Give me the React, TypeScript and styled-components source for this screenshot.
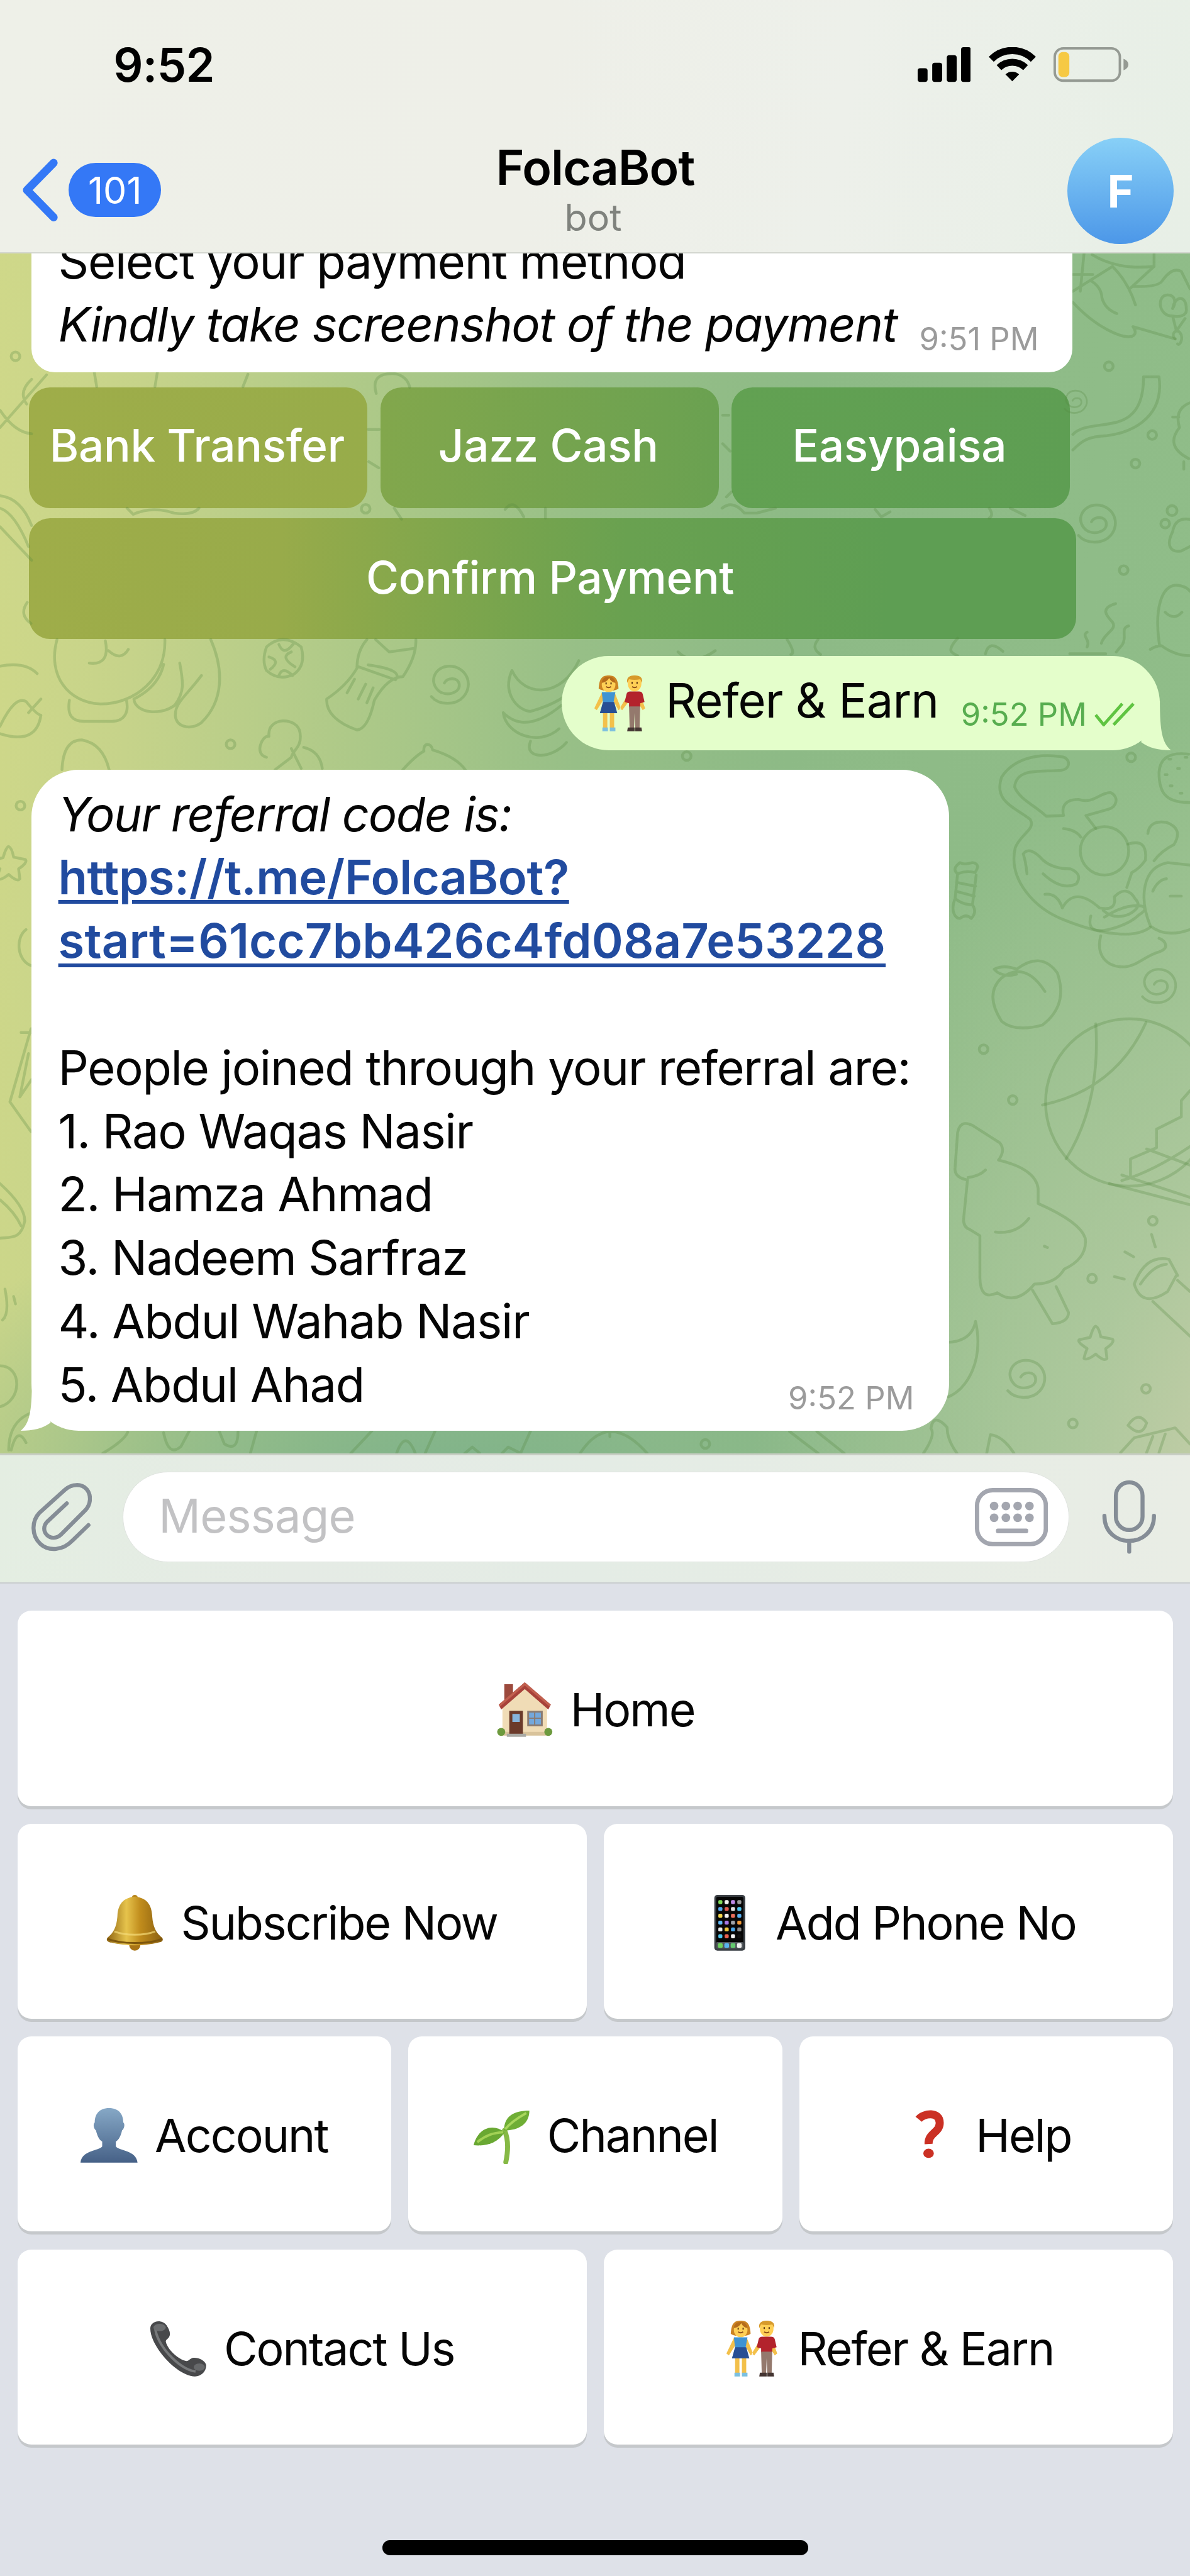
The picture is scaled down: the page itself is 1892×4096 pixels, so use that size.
import type { ReactNode } from "react";
import styled, { createGlobalStyle } from "styled-components";

interface IKey {
  label: string;
  emoji: ReactNode;
}

const GlobalStyle = createGlobalStyle`
  * {
    box-sizing: border-box;
    margin: 0;
    padding: 0;
  }

  /* 192rem is the full width of the screen */
  html {
    font-size: 9.8542px;
  }

  body {
    font-family: Inter, "Liberation Sans", sans-serif;
    font-size: 7.7rem;
    color: #050505;
    background-color: #dee1e8;
  }
`;

/* ---------- emoji ---------- */

const HouseEmoji = () => (
  <Emoji viewBox="0 0 92 92">
    <rect x="13" y="5" width="14" height="34" fill="#9c4a3d" />
    <path d="M10 40 46 8 82 40V86H10Z" fill="#f0dcb6" />
    <path d="M46 2 88 38 84 46 46 13 8 46 4 38Z" fill="#a8423a" />
    <path d="M46 2 88 38 86 41 46 7 6 41 4 38Z" fill="#c1604f" />
    <path d="M10 82h74v6H10z" fill="#d9c39b" />
    <rect x="21" y="48" width="22" height="40" fill="#6b3a2a" />
    <rect x="26" y="53" width="12" height="13" fill="#86b4dc" />
    <rect x="50" y="48" width="25" height="25" fill="#8a7b72" />
    <rect x="53" y="51" width="19" height="19" fill="#74a8dc" />
    <path d="M62 51v19M53 60h19" stroke="#8a7b72" strokeWidth="2" />
    <rect x="17" y="85" width="31" height="5" fill="#a9a9a4" />
    <circle cx="8" cy="82" r="6.500" fill="#6d9a3e" />
    <circle cx="84" cy="82" r="6.500" fill="#6d9a3e" />
  </Emoji>
);

const BellEmoji = () => (
  <Emoji viewBox="0 0 92 92">
    <defs>
      <linearGradient id="bell" x1="0" x2="1">
        <stop offset="0" stopColor="#8f6512" />
        <stop offset=".35" stopColor="#e6c34c" />
        <stop offset=".6" stopColor="#c08c1c" />
        <stop offset="1" stopColor="#8a5f10" />
      </linearGradient>
    </defs>
    <circle cx="46" cy="6" r="5" fill="#b8861c" />
    <circle cx="46" cy="82" r="9" fill="#a87416" />
    <path
      d="M46 4C27 5 19 17 18 34 17 52 12 62 2 70c-3 4 0 7 6 8 24 6 52 6 76 0 6-1 9-4 6-8-10-8-15-18-16-36C73 17 65 5 46 4Z"
      fill="url(#bell)"
    />
    <path d="M2 72c22 9 66 9 88 0" fill="none" stroke="#7d560d" strokeWidth="3" />
    <path d="M13 60c18 7 48 7 66 0" fill="none" stroke="#f3da78" strokeWidth="3" opacity=".7" />
  </Emoji>
);

const appColors = [
  ["#7ed957", "#f2f2f2", "#c08be8", "#9a9a9a"],
  ["#56a8ef", "#e05a50", "#e0e0e0", "#4cc4ee"],
  ["#f3d64b", "#f2f2f2", "#e86d5a", "#58b0f2"],
  ["#60b7f5", "#a778e8", "#9fa4a8", "#f09a38"],
  ["#e8e8e8", "#f0c93e", "#4aa8ea", "#8c8c8c"],
  ["#4cc4ee", "#ea6050", "#f4f4f4", "#111"],
];

const PhoneEmoji = () => (
  <Emoji viewBox="0 0 92 92">
    <rect x="21" y="1" width="50" height="90" rx="5" fill="#3b4045" />
    <rect x="24" y="4" width="44" height="84" rx="3" fill="#060606" />
    {appColors.map((row, y) =>
      row.map((color, x) => (
        <rect key={`${x}${y}`} x={27.5 + x * 10.2} y={9.500 + y * 11} width="6.500" height="6.500" rx="2" fill={color} />
      )),
    )}
    <rect x="24" y="77" width="44" height="11" rx="2" fill="#51575c" />
    {["#6fd35c", "#59b3ee", "#63c96e", "#f1f1f1"].map((color, x) => (
      <rect key={color} x={27 + x * 10.2} y="79" width="7.5" height="7.5" rx="2" fill={color} />
    ))}
  </Emoji>
);

const PersonEmoji = () => (
  <Emoji viewBox="0 0 92 92">
    <defs>
      <linearGradient id="person" x2="0" y2="1">
        <stop offset="0" stopColor="#86a8c6" />
        <stop offset="1" stopColor="#466187" />
      </linearGradient>
    </defs>
    <path
      d="M46 2C30 2 23 12 23 25c-3 2-2 10 2 13 2 9 5 15 10 18v8C30 71 2 70 0 90h92C90 70 62 71 57 64v-8c5-3 8-9 10-18 4-3 5-11 2-13C69 12 62 2 46 2Z"
      fill="url(#person)"
    />
  </Emoji>
);

const SeedlingEmoji = () => (
  <Emoji viewBox="0 0 92 92">
    <path d="M51 38C57 52 57 70 53 89" fill="none" stroke="#86b945" strokeWidth="8" strokeLinecap="round" />
    <path d="M50 38C50 15 66 6 91 6 91 26 76 38 50 38Z" fill="#6fae35" />
    <path d="M52 36C60 26 70 19 86 10" fill="none" stroke="#a9d75c" strokeWidth="4" />
    <path d="M51 41C32 26 8 34 1 62 22 64 40 58 51 41Z" fill="#69a832" />
    <path d="M49 41C32 42 20 46 7 57" fill="none" stroke="#a2d155" strokeWidth="4" />
  </Emoji>
);

const QuestionEmoji = () => (
  <Emoji viewBox="0 0 92 92">
    <path d="M28 20C36 10 62 7 62 26 62 42 43 42 44 60" fill="none" stroke="#cb3024" strokeWidth="13" />
    <ellipse cx="44" cy="75" rx="8.5" ry="7.5" fill="#cb3024" />
  </Emoji>
);

const ReceiverEmoji = () => (
  <Emoji viewBox="0 0 92 92">
    <path
      d="M4 6C10 0 22 1 27 8c4 6 7 12 5 18-2 5-6 5-6 9 3 13 20 28 32 31 5 1 7-4 12-5 8-1 19 4 21 11 1 10-7 19-18 19C44 91 1 42 1 14c0-4 1-6 3-8Z"
      fill="#48494b"
    />
    <path d="M9 12C10 39 47 80 74 83" fill="none" stroke="#77797b" strokeWidth="4" />
    <ellipse cx="16" cy="12" rx="10" ry="6" fill="#6c6e70" />
    <ellipse cx="80" cy="76" rx="9" ry="6" fill="#67696b" />
  </Emoji>
);

const CoupleEmoji = () => (
  <Emoji viewBox="0 0 92 92">
    <g fill="#f3c04a">
      <path d="M17 29 5 54l4 3 14-22ZM38 29l10 25-4 3-12-22ZM61 29 46 54l4 3 15-20ZM78 29l9 25-4 3-12-20Z" />
      <path d="M19 60h7v26h-7zM30 60h7v26h-7z" />
    </g>
    <path d="M12 22C13 4 19 1 28 1s15 3 16 21c-4 5-28 5-32 0Z" fill="#cc8423" />
    <ellipse cx="28" cy="16" rx="11" ry="12" fill="#ffcf55" />
    <path d="M17 13q8-1 12-8 3 7 10 8-1-10-11-10T17 13Z" fill="#b56c1b" />
    <path d="M17 28h22l-3 17 5 17H14l5-17Z" fill="#3f93d3" />
    <path d="M19 44h18l5 18H14Z" fill="#284f94" />
    <path d="M18 85h9v6h-9zM30 85h9v6h-9z" fill="#7cc0e0" />
    <ellipse cx="70" cy="14" rx="11" ry="13" fill="#ffcf55" />
    <path d="M58 13q-2-12 12-12t12 12l-3-6q-9 2-18 0Z" fill="#d79a2b" />
    <path d="M57 31q1-4 6-4h14q5 0 6 4l3 13-7 2v6H61v-6l-7-2Z" fill="#b3232c" />
    <path d="M61 51h18l-1 35h-7l-1-24-1 24h-7Z" fill="#94796d" />
    <path d="M59 85h11v6H58zM71 85h10l1 6H71z" fill="#443532" />
    <path d="M24 19q4 3 8 0M66 19q4 3 8 0" fill="none" stroke="#8d4d17" strokeWidth="2" />
    <path d="M23 14h2M31 14h2M65 13h2M73 13h2" stroke="#5c3411" strokeWidth="3" />
  </Emoji>
);

/* ---------- interface icons ---------- */

const SignalIcon = () => (
  <svg viewBox="0 0 86 56">
    <rect y="34" width="16" height="22" rx="4" />
    <rect x="23.5" y="25" width="16" height="31" rx="4" />
    <rect x="47" y="13" width="16" height="43" rx="4" />
    <rect x="70" width="16" height="56" rx="4" />
  </svg>
);

const WifiIcon = () => (
  <svg viewBox="0 0 76 56">
    <path d="M4 19.500a48 48 0 0 1 68 0" fill="none" stroke="#000" strokeWidth="11.500" />
    <path d="M16.500 33a31 31 0 0 1 43 0" fill="none" stroke="#000" strokeWidth="11" />
    <path d="M38 55 27 44a16 16 0 0 1 22 0Z" />
  </svg>
);

const BatteryIcon = () => (
  <svg viewBox="0 0 123 57">
    <rect x="2" y="2" width="107" height="53" rx="14" fill="none" stroke="#959a93" strokeWidth="4" />
    <rect x="8" y="8" width="18" height="41" rx="7" fill="#f6c944" />
    <path d="M115 19q8 3 8 9.500t-8 9.500Z" fill="#959a93" />
  </svg>
);

const BackIcon = () => (
  <svg viewBox="0 0 58 102">
    <path d="M51 7 8 51l43 44" fill="none" stroke="#3478f6" strokeWidth="13" strokeLinecap="round" strokeLinejoin="round" />
  </svg>
);

const ChecksIcon = () => (
  <svg viewBox="0 0 66 38">
    <path d="M2 20 15 36 45 2M31 36 63 2" fill="none" stroke="#5fc441" strokeWidth="5" strokeLinejoin="round" />
  </svg>
);

const ClipIcon = () => (
  <svg viewBox="0 0 98 110">
    <path
      d="M93 68 67 93C52 109 29 111 15 98 1 84 1 62 14 48L55 11C66 1 82 1 90 10c8 10 7 24-2 34L49 83c-7 7-17 7-23 1s-6-15 1-22l31-29"
      fill="none"
      stroke="#858d96"
      strokeWidth="6.500"
      strokeLinecap="round"
    />
  </svg>
);

const KeyboardIcon = () => (
  <svg viewBox="0 0 118 94">
    <rect x="3.500" y="3.500" width="111" height="87" rx="25" fill="none" stroke="#a3a6af" strokeWidth="7" />
    {[31, 50, 69, 88].map((x) => (
      <g key={x} fill="#a3a6af">
        <circle cx={x} cy="29" r="7" />
        <circle cx={x} cy="48" r="7" />
      </g>
    ))}
    <rect x="34" y="65.500" width="52" height="7.500" rx="3" fill="#a3a6af" />
  </svg>
);

const MicIcon = () => (
  <svg viewBox="0 0 88 120">
    <g fill="none" stroke="#858d96" strokeWidth="6.500" strokeLinecap="round">
      <rect x="22.500" y="4" width="43" height="77" rx="21.500" />
      <path d="M4 58c0 54 80 54 80 0M44 99v17" />
    </g>
  </svg>
);

const Tail = ({ left }: { left?: boolean }) => (
  <TailSvg viewBox="0 0 80 60" $left={left}>
    <path d="M62-20C62 30 66 48 80 60 60 60 44 56 32 47V30L52-20Z" fill={left ? "#fff" : "#e4fecb"} />
  </TailSvg>
);

/* ---------- wallpaper ---------- */

const Spiral = ({ x, y, r = 1 }: { x: number; y: number; r?: number }) => (
  <path
    transform={`translate(${x} ${y}) scale(${r})`}
    d="M-11-4C-7-13 12-14 13-1 14 13-9 18-20 9-38-7-25-31-3-31 24-31 37-2 20 18 7 33-20 32-32 18"
  />
);

const Star = ({ x, y }: { x: number; y: number }) => (
  <path
    transform={`translate(${x} ${y})`}
    d="M0-28Q5-26 8-11L27-7Q31-2 16 8L18 24Q14 30 0 17-14 28-19 24-18 18-14 8-30-2-27-6L-9-10Q-4-28 0-28Z"
  />
);

const dots = [
  [1789, 591], [1859, 702], [1832, 748], [1813, 920], [1587, 1693], [1634, 1775], [1762, 2063], [1860, 1970],
  [1849, 2241], [1731, 2297], [1825, 1222], [372, 1201], [590, 821], [25, 575], [33, 1300], [1138, 2330], [1108, 1220],
];

const Wallpaper = () => (
  <WallpaperSvg viewBox="0 409 1920 1936" preserveAspectRatio="none">
    {dots.map(([x, y]) => (
      <circle key={x} cx={x} cy={y} r="7" />
    ))}
    <Spiral x={1772} y={846} />
    <Spiral x={1737} y={649} r={0.6} />
    <Spiral x={728} y={1106} />
    <Spiral x={1872} y={1592} r={0.9} />
    <Spiral x={1658} y={2226} />
    <Star x={1768} y={2168} />
    <Star x={14} y={1394} />
    {/* hat, butterfly and ribbon */}
    <path d="M1731 488C1770 530 1810 546 1826 543 1836 539 1830 530 1828 527L1896 547M1731 470 1795 430Q1820 455 1832 492M1760 453q17 10 18 28 5 18 24 25M1743 470l6-61M1731 443h32M1762 411q40 25 100 19V409M1862 430l-38 35M1828 462q42 2 48-10 16-22 30-14l14 28" />
    <path d="M1892 510c-24 0-26-34-8-34 12 0 14 12 8 22 4-22 22-22 22 0 2 12-12 14-22 12Zm0 0 6 24 14-20M1896 547c-8-8 2-18 8-10s0 22-4 18" />
    <path d="M1731 701C1760 670 1846 712 1845 608H1870C1880 680 1815 700 1786 703 1755 704 1745 712 1731 726" />
    {/* bird, paw, egg and steam */}
    <path d="M1920 650q-26 10-17 40-24 30 15 50M1892 673h10M1910 745v12M1920 838q-24-4-28 20c-12 24-2 34 14 31l14-7" />
    <circle cx="1891" cy="824" r="8" />
    <circle cx="1880" cy="845" r="7" />
    <path d="M1871 1042C1862 985 1873 945 1898 944q17 2 22 10M1880 988q14 14 27 0M1856 1048q9-6 18-6 22 16 46 16" />
    <path d="M1800 974c-28 8-12 22-5 30 8 12-14 18-18 34M1821 1010c-14 4-2 18-10 30l-10 12M1754 1020c-10 6 6 12 0 24M1726 1055h58" />
    {/* pear, sock and bananas */}
    <path d="M92 1032C76 1090 110 1134 162 1136 218 1136 268 1095 266 1032M112 1130c-4 24 4 34 24 34h44c22 0 28-16 24-34M340 1032c22 50 20 100-15 134-18 14-44 6-42-14 0-18 18-30 42-62M290 1070c6 32 8 46-8 68-24 18-64 12-66-10q40-20 48-56M170 1034q8 40-26 36M175 1050q20 18 32-2" />
    <path d="M592 1032Q576 1050 576 1078 560 1106 527 1128 526 1160 576 1178 594 1176 604 1130 626 1092 650 1092 672 1060 671 1032M576 1075l62 22q14-16-44-24M606 1032l22 20 42-6M572 1096l-12 22M590 1104l-12 24M602 1110l-10 24" />
    <path d="M826 1082c20 44 80 44 108-16M826 1082c-16 36 8 64 30 66 34-10 66-24 76-52M812 1150c4 34 56 56 90 26M812 1150q36 36 94-12M856 1196c-12 30 34 30 58 2" />
    <path d="M430 1044q26-24 56 0 8 30-12 44-24 12-44-6-8-16 0-38ZM450 1040q8 20 24-2M470 1052q-20 8 6 24M450 1090q6-16 22 0M434 1060q20 6 2 20" />
    <path d="M430 1222c-20-4-8-36 4-34-4-32 46-32 50-6 4 24-12 28-14 40l-26 20M470 1208l16 32M490 1206q26 6 30 34" />
    <path d="M650 1242q20-22 34-30c-2-14 12-14 14-2q40 12 54 34M100 1242q2-48 32-48 34 6 44 48" />
    {/* between the rows of buttons */}
    <path d="M152 600l4 24M254 600l-4 24M400 604l-8 20M607 635q-10-34 30-32 20 4 24 22M594 693h18M595 745l16 10M205 820l10 10q30-14 66-2 30 4 40-8M636 820l12 18M815 822q14-20 30 12M880 820v16M1165 820q18-14 36 8l20 0 30-8M1412 822l10 12 14-8M1596 820q8 12 0 16M1630 820l24 12" />
    <path d="M1166 670h10M1166 716l12 12M1172 802l8-8M1094 1052q24 24 60-2M1270 1032q14 22 6 24M1320 1032q-12 14 4 24M1545 1030c-20 22-8 24 0 28M1590 1055q6-24 28-4" />
    {/* left edge */}
    <path d="M0 690 75 605M51 612q-22 20-8 40M0 662q24 36 51 38M0 820q24 8 46 62M0 850l51 54M0 800q34 4 51 48M0 1075q40-8 60 12M44 972q-14 20 6 34M0 1172q24-50 42-40 18 22 24 22c-4 28-22 44-66 30M46 1150l20-22M42 1500c-18 14-14 50 8 58M50 1660 16 1778l34 48M46 1700l-14 70 19-28M34 1666h17M0 1910q40 36 40 60c-6 30-22 26-40 28M0 1936q24 20 34 42M8 2080q8 40-4 50M22 2092l3 12M0 2204c36 0 36 56 0 66M50 2280q-36 14-36 60M18 2340q10-40 24-12" />
    {/* cat with a ball of yarn */}
    <path d="M1712 1243C1680 1246 1640 1238 1637 1270 1645 1290 1670 1300 1688 1317L1716 1316C1712 1300 1720 1290 1740 1290 1765 1298 1775 1278 1792 1279 1806 1286 1802 1302 1788 1306L1752 1316 1768 1337M1712 1243c18-2 14-22 0-22C1670 1215 1634 1226 1616 1254 1602 1294 1640 1304 1662 1322 1672 1338 1646 1346 1638 1368 1626 1420 1670 1466 1716 1484 1776 1508 1830 1516 1856 1496M1716 1337q20 2 28 14" />
    <circle cx="1782" cy="1373" r="39" />
    <path d="M1651 1378q10-14 32 10 16 14 44 14 20 8 10 24-24 12-54-16M1657 1410q-2-20-6-32M1714 1465q-8-24-28-22M1714 1465q20-36 60 0 28 6 24-18 20-20 34 4 12 12-10 24-24 10-42-6M1760 1478q-8 30 28 22 34-8 50-24 16-10 4-14-26-4-60 18M1820 1362q32-10 28 26-10 14-22 20l-8 24M1856 1494C1838 1450 1842 1400 1884 1392l36 4M1856 1494q24 20 64 6M1852 1345q2-22 30-18 28 10 12 36-20 10-32 26M1888 1446h18M1860 1438q8-18 22-20M1776 1510c-8 30 8 52 40 50 20-2 32-18 54-24 18-6 10-18 0-22" />
    <path d="M1545 1410q14-6 28-2 10-14-4-16-14 4-20 0-14 10-4 18Zm0 0-4 40q12 10 28 10l6-48M1544 1424l30 6M1542 1438l30 8M1541 1450c-8 20 0 32 8 32q10-8 18 0 10-10 2-22" />
    <path d="M1918 1217q-46-6-48 30c0 36 14 48 50 48M1886 1225h3M1900 1240h3M1888 1268h3M1904 1280h3M1912 1222h3M1880 1250h3" />
    {/* peach and beach ball */}
    <path d="M1640 1564q40-30 66 6 18 52-24 84-44 12-66-6-28-44 0-70 38-28 70 22M1640 1564q-20-8-36 0 12 14 36 8" />
    <circle cx="1822" cy="1779" r="135" />
    <path d="M1682 1783Q1800 1758 1849 1650M1768 1652Q1776 1780 1720 1870M1920 1760l-14 16v26l-40 20v30l-42 18v28M1850 1854l70 26M1920 1850q-60 40-110 55M1790 1910l130 34M1810 1896l110 36" />
    {/* tree, tube and crescents */}
    <path d="M1545 1828q4-22 24-12l44 28q10 12-2 28 60 14 64 46v24q68 30 76 56 4 32-34 50-14 24-48 24-30 36-60 14-28 14-28-26v-66l-16-10q-12-4-10-20l6-60q-22-4-20-20ZM1562 1900q18-2 28-12M1606 1988q34 4 54-22M1666 2082l32 54q26-2 26-18l-20-42M1685 2011l5 2" />
    <path d="M1530 2166q38-2 44-34c14 64-14 110-44 122M1830 2072q18-48 56-40l14 26M1830 2072q12 40 54 12l14-26M1840 2072q20-30 42-32M1860 2100l60 56M1900 2066l20 18M1858 1992l6 20M1815 2020l14 8M1798 2060l16 4" />
    <path d="M1820 2300q16-24 30-4-8 26-30 4ZM1920 2330l-24-26-66 16-22 24M1860 2318l-10 26M1880 2314l-10 30M1490 2345q20-30 12-40 4-26 26-2 0 20 16 42M1592 2345l6-30q20 2 38 30" />
    {/* along the lower edge */}
    <path d="M166 2345q34-20 40-34M264 2312q8 40 28 22l14-26M354 2310l8 20q22 14 22-20M404 2345l10-36M566 2345l34-36M640 2345q14-40 30 0M686 2345l16-36M750 2345l12-10 12 10M810 2345l10-10 20 10 16-36M936 2345q46-70 108 0M984 2318v-14M1274 2310l46 35M1318 2310l44 35" />
  </WallpaperSvg>
);

const keyRows: IKey[][] = [
  [{ label: "Home", emoji: <HouseEmoji /> }],
  [
    { label: "Subscribe Now", emoji: <BellEmoji /> },
    { label: "Add Phone No", emoji: <PhoneEmoji /> },
  ],
  [
    { label: "Account", emoji: <PersonEmoji /> },
    { label: "Channel", emoji: <SeedlingEmoji /> },
    { label: "Help", emoji: <QuestionEmoji /> },
  ],
  [
    { label: "Contact Us", emoji: <ReceiverEmoji /> },
    { label: "Refer & Earn", emoji: <CoupleEmoji /> },
  ],
];

const people = ["Rao Waqas Nasir", "Hamza Ahmad", "Nadeem Sarfraz", "Abdul Wahab Nasir", "Abdul Ahad"];

export default function App() {
  return (
    <>
      <GlobalStyle />
      <Screen>
        <Header>
          <StatusBar>
            <Clock>9:52</Clock>
            <StatusIcons>
              <SignalIcon />
              <WifiIcon />
              <BatteryIcon />
            </StatusIcons>
          </StatusBar>
          <NavBar>
            <BackButton>
              <BackIcon />
              <Unread>101</Unread>
            </BackButton>
            <TitleDiv>
              <Title>FolcaBot</Title>
              <Subtitle>bot</Subtitle>
            </TitleDiv>
            <Avatar>F</Avatar>
          </NavBar>
        </Header>

        <Chat>
          <Wallpaper />
          <PaymentBubble>
            <Line>Select your payment method</Line>
            <LastLine>
              <Line $italic>Kindly take screenshot of the payment</Line>
              <Time $height={5.8}>9:51 PM</Time>
            </LastLine>
          </PaymentBubble>
          <InlineRow>
            <InlineButton $from="#9fad49" $to="#97ac4a">Bank Transfer</InlineButton>
            <InlineButton $from="#82a74c" $to="#6aa151">Jazz Cash</InlineButton>
            <InlineButton $from="#62a152" $to="#5e9e53">Easypaisa</InlineButton>
          </InlineRow>
          <InlineRow $wide>
            <InlineButton $from="#9fad49" $to="#5e9e53" $wide>
              Confirm Payment
            </InlineButton>
          </InlineRow>
          <SentBubble>
            <CoupleEmoji />
            <SentText>Refer &amp; Earn</SentText>
            <SentStatus>
              9:52 PM
              <ChecksIcon />
            </SentStatus>
            <Tail />
          </SentBubble>
          <ReferralBubble>
            <Line $italic>Your referral code is:</Line>
            <Link $track={-0.006}>https://t.me/FolcaBot?</Link>
            <Link $track={0.002}>start=61cc7bb426c4fd08a7e53228</Link>
            <Line />
            <Line>People joined through your referral are:</Line>
            {people.slice(0, -1).map((name, i) => (
              <Line key={name}>
                {i + 1}. {name}
              </Line>
            ))}
            <LastLine>
              <Line>
                {people.length}. {people[people.length - 1]}
              </Line>
              <Time $height={6.1}>9:52 PM</Time>
            </LastLine>
            <Tail left />
          </ReferralBubble>
        </Chat>

        <Composer>
          <ClipIcon />
          <Field>
            <Placeholder>Message</Placeholder>
            <KeyboardIcon />
          </Field>
          <MicIcon />
        </Composer>

        <Keyboard>
          {keyRows.map((row) => (
            <KeyRow key={row[0].label}>
              {row.map(({ label, emoji }) => (
                <Key key={label}>
                  {emoji}
                  <span>{label}</span>
                </Key>
              ))}
            </KeyRow>
          ))}
          <HomeIndicator />
        </Keyboard>
      </Screen>
    </>
  );
}

const Screen = styled.div`
  width: 100%;
  height: 100vh;
  display: flex;
  flex-direction: column;
  overflow: hidden;
`;

const Header = styled.header`
  height: 40.9rem;
  flex-shrink: 0;
  border-bottom: 0.3rem solid #d3d6cf;
  background: linear-gradient(100deg, #eef0e8 0%, #eeefe8 45%, #edf0ea 70%, #e7efe6 100%);
`;

const StatusBar = styled.div`
  height: 20.9rem;
  padding: 0 9.9rem 0 18.3rem;
  display: flex;
  align-items: center;
  justify-content: space-between;
`;

const Clock = styled.span`
  font-size: 7.5rem;
  font-weight: 600;
  letter-spacing: -0.01em;
  color: #000;
`;

const StatusIcons = styled.div`
  display: flex;
  align-items: center;
  gap: 2.9rem;

  svg {
    height: 5.6rem;
  }
`;

const NavBar = styled.nav`
  height: 19.8rem;
  padding: 0 2.6rem 0 2.7rem;
  display: grid;
  grid-template-columns: 1fr auto 1fr;
  align-items: center;
`;

const BackButton = styled.div`
  display: flex;
  align-items: center;
  gap: 1.7rem;
  margin: 0 0 0.3rem 0.9rem;

  svg {
    height: 10.2rem;
  }
`;

const Unread = styled.span`
  width: 14.9rem;
  height: 8.7rem;
  display: flex;
  align-items: center;
  justify-content: center;
  border-radius: 4.4rem;
  background-color: #3478f6;
  color: #fff;
  font-size: 6rem;
`;

const TitleDiv = styled.div`
  padding-top: 0.4rem;
  display: flex;
  flex-direction: column;
  align-items: center;
`;

const Title = styled.h1`
  font-size: 7.8rem;
  font-weight: 600;
  line-height: 8.4rem;
  letter-spacing: -0.013em;
  color: #000;
`;

const Subtitle = styled.span`
  margin-right: 0.7rem;
  font-size: 6rem;
  line-height: 7.8rem;
  color: #7f827d;
`;

const Avatar = styled.div`
  width: 17.2rem;
  height: 17.2rem;
  justify-self: end;
  display: flex;
  align-items: center;
  justify-content: center;
  border-radius: 50%;
  background: linear-gradient(#88d0f7, #4c97e8);
  color: #fff;
  font-size: 7.3rem;
  font-weight: 700;
`;

const Chat = styled.main`
  position: relative;
  height: 193.6rem;
  flex-shrink: 0;
  padding-bottom: 3.6rem;
  display: flex;
  flex-direction: column;
  justify-content: flex-end;
  overflow: hidden;
  background:
    radial-gradient(90rem 130rem at 110% 104%, #cfd0ad 0%, #b5cba2c8 42%, transparent 100%),
    radial-gradient(95rem 50rem at 38% 103%, #7eb28a 0%, #88b78acc 40%, transparent 100%),
    linear-gradient(93deg, #cfd889 0%, #c6d38a 12%, #abc888 32%, #97bf87 48%, #8dba86 65%, #90bd89 100%);
`;

const WallpaperSvg = styled.svg`
  position: absolute;
  inset: 0;
  width: 100%;
  height: 100%;
  fill: none;
  stroke: #55883f;
  stroke-opacity: 0.28;
  stroke-width: 4.5;
  stroke-linecap: round;
  stroke-linejoin: round;
`;

const Bubble = styled.section`
  position: relative;
  flex-shrink: 0;
  margin-left: 5.1rem;
  background-color: #fff;
`;

const PaymentBubble = styled(Bubble)`
  width: 167.9rem;
  padding: 2.1rem 5.4rem 2.5rem 4.3rem;
  margin-bottom: 2.4rem;
  border-radius: 3.8rem;
`;

const ReferralBubble = styled(Bubble)`
  width: 148rem;
  padding: 2.1rem 5.6rem 2.3rem 4.3rem;
  border-radius: 7.6rem;
`;

const Line = styled.p<{ $italic?: boolean }>`
  height: 10.23rem;
  line-height: 10.23rem;
  font-style: ${({ $italic }) => ($italic ? "italic" : "normal")};
  letter-spacing: ${({ $italic }) => ($italic ? "-0.018em" : "-0.0172em")};
  white-space: nowrap;
`;

const LastLine = styled.div`
  display: flex;
  align-items: flex-end;
  justify-content: space-between;
`;

const Link = styled.a<{ $track: number }>`
  display: block;
  line-height: 10.23rem;
  font-weight: 600;
  letter-spacing: ${({ $track }) => $track}em;
  color: #214b9f;
  white-space: nowrap;
  text-decoration: underline;
  text-decoration-thickness: 0.6rem;
  text-underline-offset: 0.9rem;
`;

const Time = styled.span<{ $height: number }>`
  font-size: 5.15rem;
  line-height: ${({ $height }) => $height}rem;
  color: #9b9b9b;
  white-space: nowrap;
`;

const InlineRow = styled.div<{ $wide?: boolean }>`
  width: ${({ $wide }) => ($wide ? "168.9rem" : "167.9rem")};
  margin-left: 4.7rem;
  margin-bottom: ${({ $wide }) => ($wide ? "2.7rem" : "1.65rem")};
  display: flex;
  gap: 2.05rem;
  flex-shrink: 0;
`;

const InlineButton = styled.button<{ $from: string; $to: string; $wide?: boolean }>`
  flex: 1;
  height: 19.5rem;
  padding: ${({ $wide }) => ($wide ? "0 0.8rem 0.4rem 0" : "0 0.4rem 0.8rem 0")};
  border: none;
  border-radius: 3.4rem;
  background: ${({ $from, $to, $wide }) =>
    $wide
      ? `linear-gradient(92deg, ${$from} 0%, #98ab4a 24%, #7fa64c 40%, #69a150 57%, ${$to} 82%)`
      : `linear-gradient(92deg, ${$from}, ${$to})`};
  color: #fff;
  font-family: inherit;
  font-size: 7.2rem;
  font-weight: 500;
  letter-spacing: -0.004em;
`;

const SentBubble = styled(Bubble)`
  align-self: flex-end;
  width: 96.5rem;
  height: 15.3rem;
  margin: 0 4.9rem 3.1rem 0;
  padding-left: 4.8rem;
  display: flex;
  align-items: center;
  border-radius: 7.6rem;
  background-color: #e4fecb;
`;

const SentText = styled.span`
  margin: 0 0 0.9rem 2.8rem;
  letter-spacing: -0.012em;
`;

const SentStatus = styled.span`
  height: 6.2rem;
  margin: 3.6rem 0 0 3.6rem;
  display: flex;
  align-items: center;
  gap: 1.2rem;
  font-size: 5.15rem;
  color: #57ad4f;

  svg {
    height: 3.8rem;
  }
`;

const TailSvg = styled.svg<{ $left?: boolean }>`
  position: absolute;
  bottom: 0;
  ${({ $left }) => ($left ? "left: -1.8rem; transform: scaleX(-1);" : "right: -1.8rem;")}
  width: 8rem;
  height: 6rem;
  overflow: visible;
`;

const Composer = styled.section`
  height: 20.8rem;
  flex-shrink: 0;
  padding: 0 5.4rem 0.5rem 5rem;
  display: flex;
  align-items: center;
  border-top: 0.4rem solid #c8cec4;
  background: linear-gradient(95deg, #e4eee2 0%, #e5ebe5 25%, #e4ece5 50%, #e9ede5 100%);

  > svg {
    height: 11rem;
    flex-shrink: 0;
  }

  > svg:last-child {
    height: 12rem;
  }
`;

const Field = styled.div`
  flex: 1;
  height: 14.6rem;
  margin: 0 5.3rem 0 5rem;
  padding: 0 3.3rem 0 5.7rem;
  display: flex;
  align-items: center;
  justify-content: space-between;
  border: 0.1rem solid #dfe3df;
  border-radius: 7.3rem;
  background-color: #fff;

  svg {
    height: 9.4rem;
  }
`;

const Placeholder = styled.span`
  padding-bottom: 0.4rem;
  font-size: 7.5rem;
  letter-spacing: -0.01em;
  color: #c2c2c4;
`;

const Keyboard = styled.section`
  flex: 1;
  padding: 4.4rem 2.7rem 3.4rem 2.8rem;
  display: flex;
  flex-direction: column;
  gap: 2.85rem;
  border-top: 0.3rem solid #c9cdcf;
  background-color: #dee1e8;
`;

const KeyRow = styled.div`
  display: flex;
  gap: 2.8rem;
`;

const Key = styled.button`
  flex: 1;
  height: 31.5rem;
  padding-top: 0.5rem;
  display: flex;
  align-items: center;
  justify-content: center;
  gap: 2.8rem;
  border: none;
  border-radius: 2.2rem;
  background-color: #fff;
  box-shadow: 0 0.5rem 0 #c5c8cb;
  color: #050505;
  font-family: inherit;
  font-size: 7.45rem;
  letter-spacing: -0.027em;
`;

const Emoji = styled.svg`
  width: 9.2rem;
  height: 9.2rem;
  flex-shrink: 0;
`;

const HomeIndicator = styled.div`
  width: 68.7rem;
  height: 2.4rem;
  margin: auto auto 0;
  border-radius: 1.2rem;
  background-color: #000;
`;
